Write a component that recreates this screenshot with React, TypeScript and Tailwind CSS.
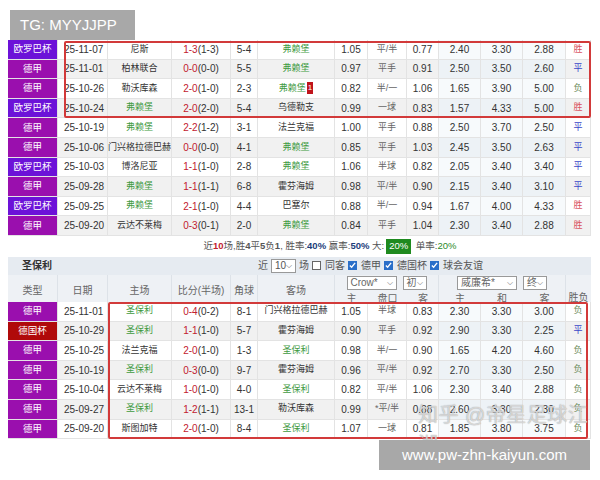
import React from "react";

const cols = "grid grid-cols-[50px_50px_64px_59px_27px_77px_33px_39px_32px_42px_42px_43px_25px]";
const font = { fontFamily: '"Liberation Sans","Noto Sans CJK SC",sans-serif' };

type Row = [string, string, string, string, string, string, string, string, string, string, string, string, string, string];
const top: Row[] = [
  ["欧罗巴杯","25-11-07","尼斯","1-3","(1-3)","5-4","弗赖堡","1.05","平/半","0.77","2.40","3.30","2.88","胜"],
  ["德甲","25-11-01","柏林联合","0-0","(0-0)","5-5","弗赖堡","0.97","平手","0.91","2.50","3.50","2.60","平"],
  ["德甲","25-10-26","勒沃库森","2-0","(1-0)","2-3","弗赖堡","0.82","半/一","1.06","1.65","3.90","5.00","负"],
  ["欧罗巴杯","25-10-24","弗赖堡","2-0","(2-0)","5-4","乌德勒支","0.99","一球","0.83","1.57","4.33","5.00","胜"],
  ["德甲","25-10-19","弗赖堡","2-2","(1-2)","3-1","法兰克福","1.00","平手","0.88","2.50","3.70","2.50","平"],
  ["德甲","25-10-06","门兴格拉德巴赫","0-0","(0-0)","4-1","弗赖堡","0.85","平手","1.03","2.45","3.50","2.63","平"],
  ["欧罗巴杯","25-10-03","博洛尼亚","1-1","(1-0)","2-8","弗赖堡","1.06","半球","0.82","2.05","3.40","3.40","平"],
  ["德甲","25-09-28","弗赖堡","1-1","(1-1)","6-8","霍芬海姆","0.98","平/半","0.90","2.15","3.40","3.10","平"],
  ["欧罗巴杯","25-09-25","弗赖堡","2-1","(1-0)","4-4","巴塞尔","0.88","半/一","0.94","1.67","4.00","4.33","胜"],
  ["德甲","25-09-20","云达不莱梅","0-3","(0-1)","2-0","弗赖堡","0.84","平手","1.04","2.30","3.40","2.88","胜"],
];
const bot: Row[] = [
  ["德甲","25-11-01","圣保利","0-4","(0-2)","8-1","门兴格拉德巴赫","1.05","半球","0.83","2.30","3.30","3.00","负"],
  ["德国杯","25-10-29","圣保利","1-1","(1-0)","5-7","霍芬海姆","0.90","平手","0.92","2.90","3.30","2.25","平"],
  ["德甲","25-10-25","法兰克福","2-0","(1-0)","1-3","圣保利","0.98","半/一","0.90","1.65","4.20","4.60","负"],
  ["德甲","25-10-19","圣保利","0-3","(0-0)","9-7","霍芬海姆","0.96","平/半","0.92","2.70","3.30","2.50","负"],
  ["德甲","25-10-04","云达不莱梅","1-0","(1-0)","4-0","圣保利","0.82","平/半","1.06","2.30","3.40","2.88","负"],
  ["德甲","25-09-27","圣保利","1-2","(1-1)","13-1","勒沃库森","0.99","*平/半","0.88","2.60","3.30","2.30","负"],
  ["德甲","25-09-20","斯图加特","2-0","(1-0)","8-4","圣保利","1.07","一球","0.81","1.85","3.80","3.75","负"],
];

const typeBg = (t: string) => t === "欧罗巴杯" ? "bg-[#6c12d8]" : t === "德国杯" ? "bg-[#b00a0a]" : "bg-[#9a0fae]";
const green = (s: string) => s === "弗赖堡" || s === "圣保利";
const resCls = (r: string) => r === "胜" ? "text-[#d9535f]" : r === "平" ? "text-[#3a46c8]" : "text-[#6a8a5a]";

function DataRow({ r, i }: { r: Row; i: number }) {
  const bg = i % 2 ? "bg-[#f1f1f1]" : "bg-white";
  const c = "flex items-center justify-center whitespace-nowrap overflow-hidden border-r border-b border-[#e3e3e3] h-[19.6px]";
  return (
    <div className={`${cols} text-[10px] text-[#333]`}>
      <div className={`${c} ${typeBg(r[0])} text-white text-[9.5px]`}>{r[0]}</div>
      <div className={`${c} ${bg} justify-start pl-[6px]`}>{r[1]}</div>
      <div className={`${c} ${bg} text-[9px] ${green(r[2]) ? "text-[#3f9a3f]" : ""}`}>{r[2]}</div>
      <div className={`${c} ${bg}`}><span className="text-[#c2202f]">{r[3]}</span>{r[4]}</div>
      <div className={`${c} ${bg}`}>{r[5]}</div>
      <div className={`${c} ${bg} text-[9px] ${green(r[6]) ? "text-[#3f9a3f]" : ""}`}>{r[6]}{i === 2 && r[1] === "25-10-26" && <span className="bg-[#c0141b] text-white text-[8px] px-[1px] ml-[1px]">1</span>}</div>
      <div className={`${c} ${bg}`}>{r[7]}</div>
      <div className={`${c} ${bg} text-[9px] text-[#666]`}>{r[8]}</div>
      <div className={`${c} ${bg}`}>{r[9]}</div>
      <div className={`${c} ${i % 2 ? "bg-[#edf2f6]" : "bg-[#f7fafc]"}`}>{r[10]}</div>
      <div className={`${c} ${i % 2 ? "bg-[#edf2f6]" : "bg-[#f7fafc]"}`}>{r[11]}</div>
      <div className={`${c} ${i % 2 ? "bg-[#edf2f6]" : "bg-[#f7fafc]"}`}>{r[12]}</div>
      <div className={`${c} ${bg} text-[9px] ${resCls(r[13])}`}>{r[13]}</div>
    </div>
  );
}

const Check = ({ on }: { on?: boolean }) => (
  <span className={`inline-flex w-[9px] h-[9px] border items-center justify-center mr-[1px] ${on ? "bg-[#2a6fc9] border-[#2a6fc9]" : "bg-white border-[#666]"}`}>
    {on && <svg width="7" height="7" viewBox="0 0 8 8"><path d="M1 4l2 2 4-5" stroke="white" strokeWidth="1.5" fill="none" /></svg>}
  </span>
);
const Sel = ({ w, t }: { w: string; t: string }) => (
  <span className={`inline-flex items-center justify-between bg-white border border-[#999] h-[14px] px-[3px] text-[10px] ${w}`}>{t}<span className="text-[8px]">⌵</span></span>
);

export default function App() {
  return (
    <div className="w-[600px] h-[480px] bg-white relative overflow-hidden" style={font}>
      <div className="pt-[10px] pl-[10px]">
        <div className="w-[125px] h-[30px] bg-[#a8a8a8] text-white text-[15px] flex items-center pl-[10px]">TG: MYYJJPP</div>
      </div>
      <div className="ml-[8px] w-[583px] relative">
        {top.map((r, i) => <DataRow key={i} r={r} i={i} />)}
        <div className="absolute left-[56px] top-[1px] w-[527px] h-[77px] border-2 border-[#d23a3a] rounded-[2px]" />
      </div>
      <div className="h-[21px] flex items-center justify-center pl-[60px] text-[9.5px] text-[#555]">
        近<b className="text-[#c2202f]">10</b>场,胜<b>4</b>平<b>5</b>负<b>1</b>, 胜率:<b className="text-[#1c3d7a]">40%</b>&nbsp;赢率:<b className="text-[#1c3d7a]">50%</b>&nbsp;大:<span className="bg-[#1f8a1f] text-white px-[3px] mx-[2px]">20%</span>&nbsp;单率:<b className="text-[#2a8a2a] font-normal">20%</b>
      </div>
      <div className="ml-[8px] w-[583px] relative">
        <div className="h-[18px] bg-[#e6ebf1] flex items-center text-[10px] text-[#333]">
          <span className="pl-[14px] w-[250px] font-bold">圣保利</span>
          <span className="flex items-center gap-[3px] text-[#555]">近 <Sel w="w-[25px]" t="10" /> 场 <Check /> 同客 <Check on />德甲<Check on />德国杯<Check on />球会友谊</span>
        </div>
        <div className={`${cols} bg-[#eef1f5] h-[27px] text-[10px] text-[#666]`}>
          {["类型", "日期", "主场", "比分(半场)", "角球", "客场"].map((h) => (
            <div key={h} className="flex items-center justify-center border-r border-[#dde2e8]">{h}</div>
          ))}
          <div className="col-span-3 flex flex-col border-r border-[#dde2e8]">
            <div className="h-[16px] flex items-center justify-center gap-[6px]"><Sel w="w-[50px]" t="Crow*" /><Sel w="w-[24px]" t="初" /></div>
            <div className="grid grid-cols-[33px_39px_32px] text-center"><span>主</span><span>盘口</span><span>客</span></div>
          </div>
          <div className="col-span-3 flex flex-col border-r border-[#dde2e8]">
            <div className="h-[16px] flex items-center justify-center gap-[6px]"><Sel w="w-[60px]" t="威廉希*" /><Sel w="w-[24px]" t="终" /></div>
            <div className="grid grid-cols-[42px_42px_43px] text-center"><span>主</span><span>和</span><span>客</span></div>
          </div>
          <div className="flex items-end justify-center pb-[1px]">胜负</div>
        </div>
        {bot.map((r, i) => <DataRow key={i} r={r} i={i} />)}
        <div className="absolute left-[100px] top-[45px] w-[480px] h-[137px] border-2 border-[#d23a3a] rounded-[2px]" />
      </div>
      <div className="absolute left-[418px] top-[400px] text-[20px] text-white/60 tracking-wide" style={{ textShadow: "0 0 1px #888" }}>知乎 @帝星足球江湖</div>
      <div className="absolute left-[379px] top-[440px] w-[211px] h-[30px] bg-[#a8a8a8] text-white text-[15px] flex items-center justify-center">www.pw-zhn-kaiyun.com</div>
    </div>
  );
}
